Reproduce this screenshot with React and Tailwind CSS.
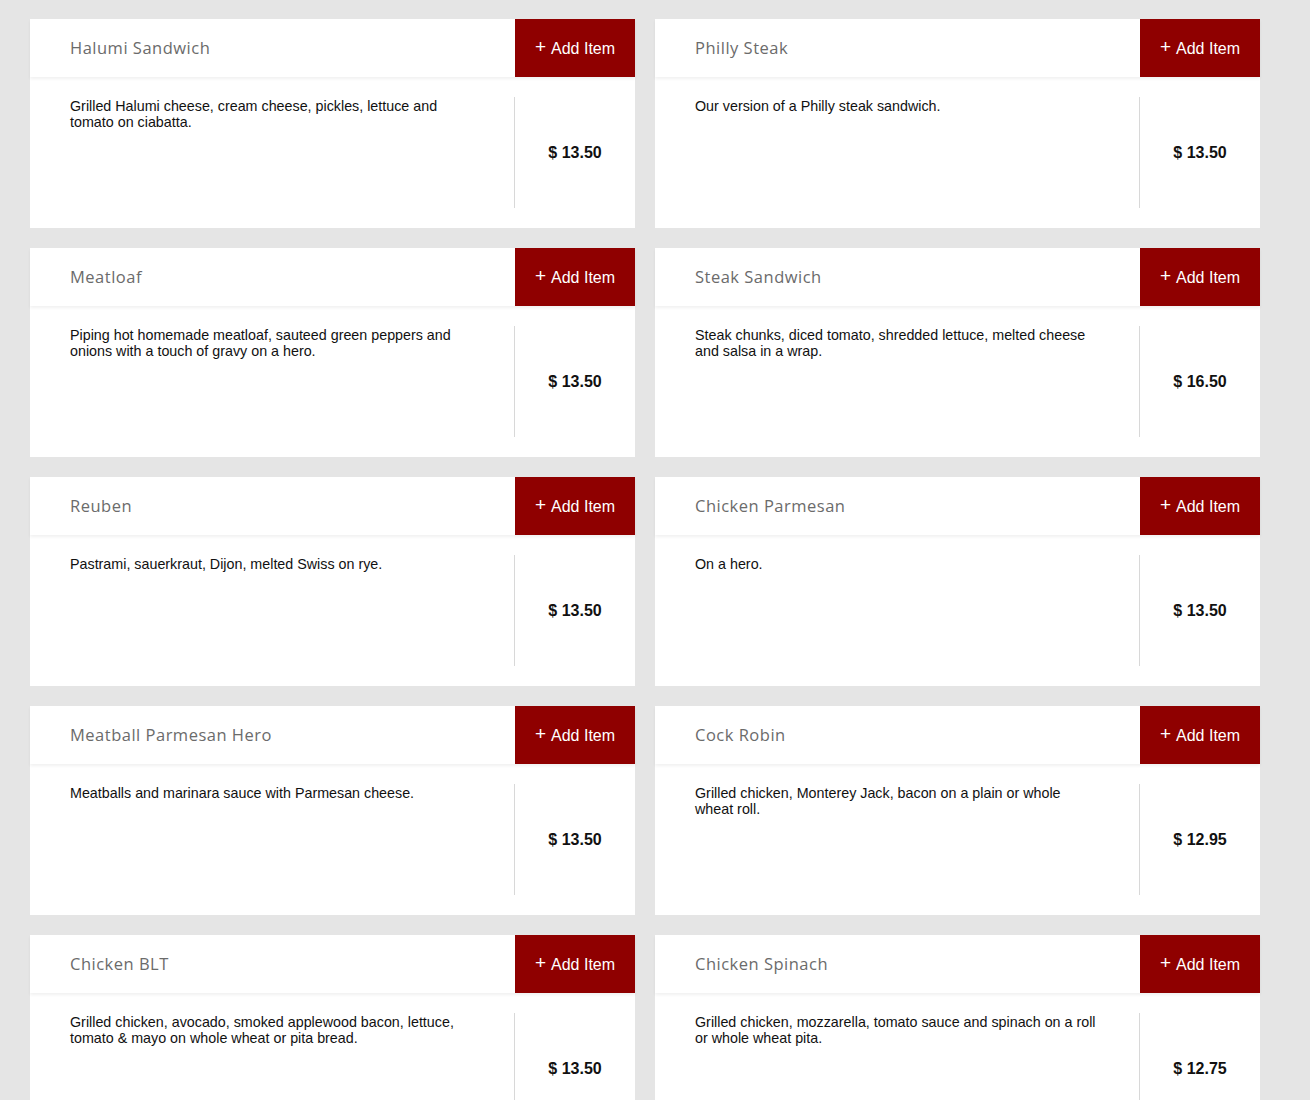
const items = [
  { name: 'Halumi Sandwich', desc: 'Grilled Halumi cheese, cream cheese, pickles, lettuce and tomato on ciabatta.', price: '13.50' },
  { name: 'Philly Steak', desc: 'Our version of a Philly steak sandwich.', price: '13.50' },
  { name: 'Meatloaf', desc: 'Piping hot homemade meatloaf, sauteed green peppers and onions with a touch of gravy on a hero.', price: '13.50' },
  { name: 'Steak Sandwich', desc: 'Steak chunks, diced tomato, shredded lettuce, melted cheese and salsa in a wrap.', price: '16.50' },
  { name: 'Reuben', desc: 'Pastrami, sauerkraut, Dijon, melted Swiss on rye.', price: '13.50' },
  { name: 'Chicken Parmesan', desc: 'On a hero.', price: '13.50' },
  { name: 'Meatball Parmesan Hero', desc: 'Meatballs and marinara sauce with Parmesan cheese.', price: '13.50' },
  { name: 'Cock Robin', desc: 'Grilled chicken, Monterey Jack, bacon on a plain or whole wheat roll.', price: '12.95' },
  { name: 'Chicken BLT', desc: 'Grilled chicken, avocado, smoked applewood bacon, lettuce, tomato & mayo on whole wheat or pita bread.', price: '13.50' },
  { name: 'Chicken Spinach', desc: 'Grilled chicken, mozzarella, tomato sauce and spinach on a roll or whole wheat pita.', price: '12.75' },
];

function MenuCard({ item }) {
  return (
    <div className="bg-white h-[209px] flex flex-col">
      <div className="flex h-[58px] shadow-[0_2px_3px_rgba(0,0,0,0.06)] relative z-10">
        <div className="flex-1 flex items-center pl-10 text-[16.5px] text-[#6b6b6b] tracking-[0.5px] font-['Open_Sans',sans-serif]">
          {item.name}
        </div>
        <button className="w-[120px] bg-[#8f0000] text-white flex items-center justify-center gap-[5px] pt-[2px] text-[16px] font-['Liberation_Sans',Arial,sans-serif]">
          <span className="text-[19px] leading-none -mt-[5px]">+</span>
          <span>Add Item</span>
        </button>
      </div>
      <div className="flex flex-1 py-5 font-['Liberation_Sans',Arial,sans-serif]">
        <p className="flex-1 pl-10 pr-10 text-[14.3px] leading-[16px] text-[#111] pt-px">{item.desc}</p>
        <div className="w-[121px] border-l border-[#d8d8d8] flex items-center justify-center text-[16px] font-bold text-[#111]">
          $ {item.price}
        </div>
      </div>
    </div>
  );
}

export default function App() {
  return (
    <div className="min-h-screen bg-[#e5e5e5] pl-[30px] pt-[19px] pb-10">
      <div className="grid grid-cols-2 gap-5 w-[1230px]">
        {items.map((item) => (
          <MenuCard key={item.name} item={item} />
        ))}
      </div>
    </div>
  );
}
